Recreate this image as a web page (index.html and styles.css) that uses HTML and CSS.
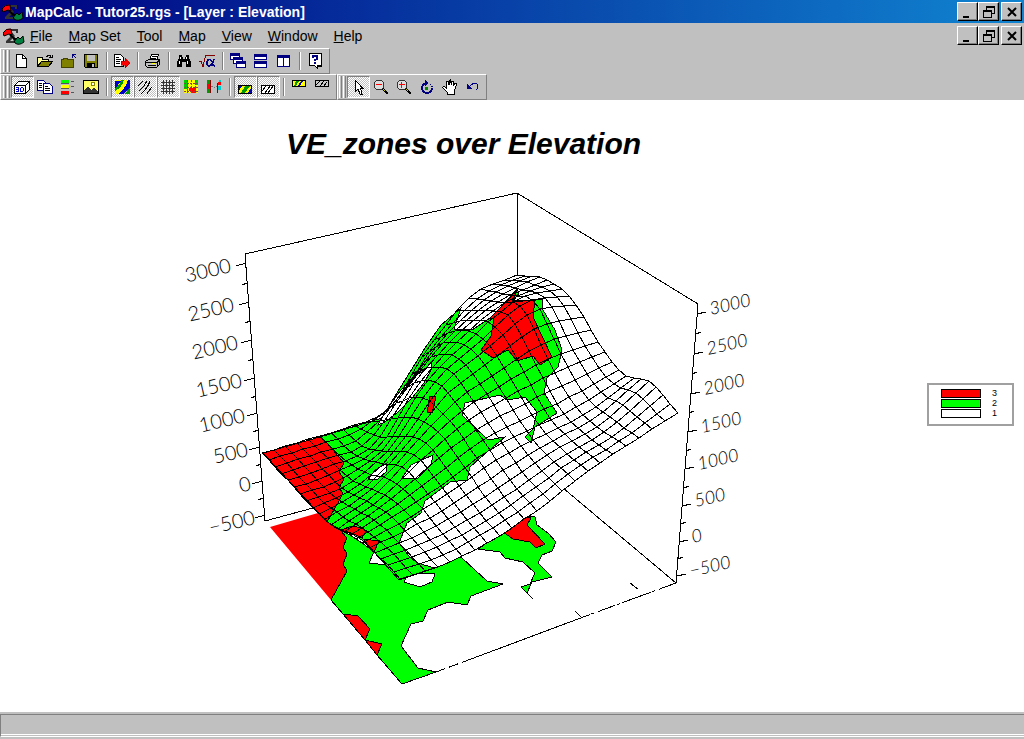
FILE: index.html
```html
<!DOCTYPE html>
<html lang="en">
<head>
<meta charset="utf-8">
<title>MapCalc - Tutor25.rgs - [Layer : Elevation]</title>
<link rel="stylesheet" href="styles.css">
</head>
<body>
<svg class="defs" aria-hidden="true">
    <symbol id="logo" viewBox="0 0 22 18">
        <path d="M3 2H15V6H13V4H8L12 9L7 14H13V12H16V16H3V14L8 9L3 4Z" fill="#333"/>
        <path d="M0 6Q3 1 8 2L9 8L6 7L1 9Z" fill="#f00" stroke="#000"/>
        <path d="M10 10L13 12L15 10L17 12L20 9L21 15Q16 19 12 16Z" fill="#008040" stroke="#000"/>
        <path d="M7 8L13 13" stroke="#000" stroke-width="2"/>
    </symbol>
    <symbol id="win-min" viewBox="0 0 16 14"><path d="M3 11H9V13H3Z"/></symbol>
    <symbol id="win-restore" viewBox="0 0 16 14"><path d="M5 1H14V9H11V8H13V3H6V5H5ZM2 5H11V13H2ZM3 7V12H10V7Z" fill-rule="evenodd"/></symbol>
    <symbol id="win-close" viewBox="0 0 16 14"><path d="M4 3L12 11M12 3L4 11" stroke="#000" stroke-width="2" shape-rendering="auto"/></symbol>
</svg>

<header class="titlebar">
    <svg class="logo"><use href="#logo"/></svg>
    <h2>MapCalc - Tutor25.rgs - [Layer : Elevation]</h2>
    <div class="winbuttons">
        <button aria-label="Minimize"><svg><use href="#win-min"/></svg></button>
        <button aria-label="Restore"><svg><use href="#win-restore"/></svg></button>
        <button class="close" aria-label="Close"><svg><use href="#win-close"/></svg></button>
    </div>
</header>

<nav class="menubar">
    <svg class="logo"><use href="#logo"/></svg>
    <button><u>F</u>ile</button>
    <button><u>M</u>ap Set</button>
    <button><u>T</u>ool</button>
    <button><u>M</u>ap</button>
    <button><u>V</u>iew</button>
    <button><u>W</u>indow</button>
    <button><u>H</u>elp</button>
    <div class="winbuttons">
        <button aria-label="Minimize layer"><svg><use href="#win-min"/></svg></button>
        <button aria-label="Restore layer"><svg><use href="#win-restore"/></svg></button>
        <button class="close" aria-label="Close layer"><svg><use href="#win-close"/></svg></button>
    </div>
</nav>

<div class="toolrow">
    <div class="toolbar">
        <i class="grip"></i>
        <button aria-label="New"><svg viewBox="0 0 16 16"><path d="M2.500 1.500H8.500L12.500 5.500V14.500H2.500Z" fill="#fff" stroke="#000"/><path d="M8.500 1.500V5.500H12.500" fill="none" stroke="#000"/></svg></button>
        <button aria-label="Open"><svg viewBox="0 0 16 16"><path d="M.5 13.500V4.500H5.500V6.500H11.500V8.500" fill="#ff9" stroke="#000"/><path d="M.5 13.500L4.500 8.500H15.500L11.500 13.500Z" fill="#808000" stroke="#000"/><path d="M9 3.500H10V2.500H13V3.500H14M15 2V5M12 4.500H15" fill="none" stroke="#000"/></svg></button>
        <button aria-label="Close file"><svg viewBox="0 0 16 16"><path d="M1.500 14.500V6.500H3.500V5.500H7.500V6.500H13.500V14.500Z" fill="#808000" stroke="#440"/><path d="M12.500 1.500V5M12 1.500H16M13 2L16 5" stroke="#000080" fill="none"/></svg></button>
        <button aria-label="Save"><svg viewBox="0 0 16 16"><path d="M1.500 1.500H14.500V14.500H2.500L1.500 13.500Z" fill="#808000" stroke="#000"/><path d="M4 2H12V8H4Z" fill="#c0c0c0"/><path d="M4 10H12V14H4Z"/><path d="M9 11H11V14H9Z" fill="#c0c0c0"/></svg></button>
        <i class="sep"></i>
        <button aria-label="Export"><svg viewBox="0 0 16 16"><path d="M.5 1.500H6.500L9.500 4.500V13.500H.5Z" fill="#fff" stroke="#000"/><path d="M2 4.500H5M2 6.500H7M2 8.500H6M2 10.500H6" stroke="#000"/><path d="M7 8H11V4.500L16 10L11 15V12H7Z" fill="#f00" stroke="#800" stroke-width=".5"/></svg></button>
        <i class="sep"></i>
        <button aria-label="Print"><svg viewBox="0 0 16 16"><path d="M4.500 7.500L6.500 1.500H13.500L11.500 7.500Z" fill="#fff" stroke="#000"/><path d="M7 3.500H12M6 5.500H11" stroke="#000"/><path d="M.5 8.500L3.500 6.500H14.500V11.500L11.500 14.500H2.500L.5 12.500Z" fill="#c0c0c0" stroke="#000"/><path d="M1 9.500H12L14 7.500M3 12.500H11M12 10V14" stroke="#000" fill="none"/><path d="M7 10.500H10" stroke="#ff0"/></svg></button>
        <i class="sep"></i>
        <button aria-label="Find"><svg viewBox="0 0 16 16"><path d="M3 2H6V4H7V6H9V4H10V2H13V5L15 9V14H10V9H6V14H1V9L3 5Z"/><path d="M4.500 4V6M3.500 8V11M10.500 4V6M11.500 8V11" stroke="#fff"/></svg></button>
        <button aria-label="Formula"><svg viewBox="0 0 16 16"><path d="M0 8.500H2L4 14L6.500 2.500H16" fill="none" stroke="#800000"/><path d="M15 6C13 14 8 15 8 10C8 5 13 5 14 12L16 13" fill="none" stroke="#000080" stroke-width="1.500"/></svg></button>
        <i class="sep"></i>
        <button aria-label="Cascade"><svg viewBox="0 0 16 16"><g fill="#fff" stroke="#000080"><path d="M.5 .5H9.500V6.500H.5ZM3.500 4.500H12.500V10.500H3.500ZM6.500 8.500H15.500V14.500H6.500Z"/><path d="M1 1.500H9M4 5.500H12M7 9.500H15" stroke-width="2"/></g></svg></button>
        <button aria-label="Tile horizontally"><svg viewBox="0 0 16 16"><g fill="#fff" stroke="#000080"><path d="M1.500 1.500H13.500V6.500H1.500ZM1.500 8.500H13.500V14.500H1.500Z"/><path d="M1 2.500H14M1 9.500H14" stroke-width="2"/></g></svg></button>
        <button aria-label="Tile vertically"><svg viewBox="0 0 16 16"><g fill="#fff" stroke="#000080"><path d="M1.500 2.500H7.500V13.500H1.500ZM7.500 2.500H13.500V13.500H7.500Z"/><path d="M1 3.500H14" stroke-width="2"/></g></svg></button>
        <i class="sep"></i>
        <button aria-label="Help"><svg viewBox="0 0 16 16"><path d="M2.500 .5H14.500V12.500H10.500V15.500L7.500 12.500H2.500Z" fill="#fff" stroke="#000"/><path d="M14 2V13H11" fill="none" stroke="#000"/><path d="M6 5V3H10V6L8 7V8M8 9V11" fill="none" stroke="#000080" stroke-width="2"/></svg></button>
    </div>
</div>

<div class="toolrow">
    <div class="toolbar">
        <i class="grip"></i>
        <button class="on" aria-label="3D view"><svg viewBox="0 0 16 16"><path d="M.5 6.500L4.500 2.500H15.500V10.500L11.500 14.500H.5ZM.5 6.500H11.500V14.500M11.500 6.500L15.500 2.500" fill="#fff" stroke="#000"/><path d="M2 8.500H4.500V12.500H2M2 10.500H4M7 8.500H8.500L9.500 9.500V11.500L8.500 12.500H6.500V8.500" fill="none" stroke="#00c"/></svg></button>
        <button aria-label="Copy"><svg viewBox="0 0 16 16"><g fill="#fff" stroke="#000080"><path d="M.5 1.500H6.500L8.500 3.500V11.500H.5Z"/><path d="M6.500 4.500H12.500L15.500 7.500V14.500H6.500Z"/></g><path d="M2 4.500H5M2 6.500H5M2 8.500H5M8 7.500H11M8 9.500H13M8 11.500H13" stroke="#000"/></svg></button>
        <button aria-label="Legend"><svg viewBox="0 0 16 16"><path d="M1 1H9V4H1Z" fill="#0f0"/><path d="M1 6H9V9H1Z" fill="#ff0"/><path d="M1 12H9V15H1Z" fill="#f00"/><path d="M1 4.500H9M1 9.500H9M1 15.500H9M11 2.500H14M11 7.500H14M11 13.500H14" stroke="#555"/></svg></button>
        <button aria-label="Picture"><svg viewBox="0 0 16 16"><path d="M.5 1.500H15.500V14.500H.5Z" fill="#ff6" stroke="#000"/><circle cx="10" cy="5" r="2" fill="#fff" stroke="#880"/><path d="M1 14V12L5 7L8 11L11 9L15 13V14Z" fill="#333"/></svg></button>
        <i class="sep"></i>
        <button class="on" aria-label="Filled zones"><svg viewBox="0 0 16 16"><path d="M1 1H16L9 15H1Z" fill="#ff0"/><path d="M1 2H7L1 10Z" fill="#00c"/><path d="M14 1H16V8L9 15H4Q12 9 14 1Z" fill="#00c"/><path d="M10 1Q8 8 1 12V9Q6 6 7 1Z" fill="#090"/><path d="M16 8V15H11Z" fill="#090"/></svg></button>
        <button class="on" aria-label="Contour lines"><svg viewBox="0 0 16 16"><path d="M6 2L1 7M10 2Q7 8 2 12M13 2Q11 9 4 15M15 8Q12 11 10 15" fill="none" stroke="#000"/></svg></button>
        <button class="on" aria-label="Grid"><svg viewBox="0 0 16 16"><path d="M1 3.500H15M1 6.500H15M1 9.500H15M1 12.500H15M3.500 1V15M6.500 1V15M9.500 1V15M12.500 1V15" stroke="#333"/></svg></button>
        <button aria-label="Cell values"><svg viewBox="0 0 16 16"><path d="M1 1H15V14H1Z" fill="#ff0"/><path d="M1 1H5V10H1ZM12 1H15V6H12Z" fill="#0c0"/><path d="M6 9H13V14H8V12H6Z" fill="#f00"/><path d="M1 4.500H15M1 8.500H15M1 12.500H15M4.500 1V14M8.500 1V14M12.500 1V14" stroke="#844" stroke-dasharray="2 1"/></svg></button>
        <button aria-label="Profile"><svg viewBox="0 0 16 16"><path d="M1 1H4V5H1ZM1 10H4V14H1Z" fill="#090"/><path d="M1 5H4V10H1ZM12 3H15V6H12Z" fill="#f00"/><path d="M12 7H15V11H12ZM13 1H15V3H13Z" fill="#0cc"/><path d="M4.500 1V14M11.500 4V14" stroke="#800"/><path d="M5 7L8 9L11 7" stroke="#777" stroke-dasharray="2 1" fill="none"/></svg></button>
        <i class="sep"></i>
        <button class="on" aria-label="Filled floor"><svg viewBox="0 0 16 16"><path d="M1.500 6.500H14.500V14.500H1.500Z" fill="#ff0" stroke="#000"/><path d="M2 7H5L2 12ZM11 14L14 9V14Z" fill="#00c"/><path d="M8 7H13L8 14H4Z" fill="#090"/></svg></button>
        <button class="on" aria-label="Contoured floor"><svg viewBox="0 0 16 16"><path d="M1.500 6.500H14.500V14.500H1.500Z" fill="#fff" stroke="#000"/><path d="M6 7L2 12M10 7L5 14M13 7L8 14" stroke="#000"/></svg></button>
        <i class="sep"></i>
        <button aria-label="Filled ceiling"><svg viewBox="0 0 16 16"><path d="M1.500 1.500H14.500V7.500H1.500Z" fill="#ff0" stroke="#000"/><path d="M10 2H12L9 7H7Z" fill="#00c"/><path d="M5 2H8L5 7H3Z" fill="#090"/></svg></button>
        <button aria-label="Contoured ceiling"><svg viewBox="0 0 16 16"><path d="M1.500 1.500H14.500V7.500H1.500Z" fill="#ccc" stroke="#000"/><path d="M6 2L2 6M10 2L6 7M13 3L10 7" stroke="#000"/></svg></button>
    </div>
    <div class="toolbar">
        <i class="grip"></i>
        <button class="on" aria-label="Select"><svg viewBox="0 0 16 16"><path d="M5.500 1.500V12.500L8 10L10 15H12L10.500 9.500H13Z" fill="#fff" stroke="#000"/></svg></button>
        <button aria-label="Zoom out"><svg viewBox="0 0 16 16"><path d="M9 9L15 15" stroke="#000" stroke-width="2"/><path d="M9 9L12 12" stroke="#cc0"/><circle cx="6" cy="6" r="5" fill="#ddd" stroke="#333"/><path d="M3 5.500H9" stroke="#f00"/></svg></button>
        <button aria-label="Zoom in"><svg viewBox="0 0 16 16"><path d="M9 9L15 15" stroke="#000" stroke-width="2"/><path d="M9 9L12 12" stroke="#cc0"/><circle cx="6" cy="6" r="5" fill="#ddd" stroke="#333"/><path d="M3 5.500H9M5.500 3V9" stroke="#f00"/></svg></button>
        <button aria-label="Rotate"><svg viewBox="0 0 16 16"><path d="M7 4A5 5 0 1 0 13 9" fill="none" stroke="#000080" stroke-width="2"/><path d="M6 1L10 4L6 7Z" fill="#000080"/><path d="M11 5.500H12M12 7.500H14" stroke="#000080"/><path d="M6 8H9V11H6Z" fill="#080"/></svg></button>
        <button aria-label="Pan"><svg viewBox="0 0 16 16"><path d="M5 15V13L.5 8.500L2 7.500L4.500 9V3L6 2.500L7 6V1.500L8.500 1L9.500 6V2H11V7L13 4L14.500 5L12.500 12V15Z" fill="#fff" stroke="#000"/></svg></button>
        <button aria-label="Undo"><svg viewBox="0 0 16 16"><path d="M4 8Q8 3 12 5Q14 8 11 11" fill="none" stroke="#000080"/><path d="M2 5V10H7Z" fill="#000080"/></svg></button>
    </div>
</div>

<main>
    <section class="chart">
        <h1>VE_zones over Elevation</h1>
        <svg id="surface" viewBox="0 166 927 538" role="img" aria-label="VE zones draped over the elevation surface">
            <g class="line">
                <path d="M517 280V193L698 304L676 583L563 488"/>
                <path d="M517 193L245 254L265 521L313 508"/>
                <path d="M676 583L586 616"  stroke-dasharray="18 4 3 2 30 3 3 2"/>
                <path d="M586 616L463 662"/>
                <path d="M436 672L463 662" stroke-dasharray="10 4"/>
                <path d="M630 583L638 589M575 611L582 618M527 593L533 599"/>
            </g>
            <!-- zones on the floor -->
            <path class="zone3" d="M270 527L318 513L330 522L340 530L347 538L343 547L347 554L343 564L347 571L331 600Z"/>
            <path class="zone2 line" d="M340 530L347 538L343 547L347 554L343 564L347 571L331 600L343 614L358 616L370 629L365 640L382 644L377 655L402 684L436 672L418 668L401 646L411 624L423 621L428 610L448 602L467 605L471 596L503 584L487 581L462 558L430 540Z"/>
            <path class="zone3 line" d="M343 614L358 616L370 629L365 640ZM365 640L382 644L377 655Z"/>
            <path class="zone2 line" d="M478 549L500 552L505 558L523 562L535 573L530 584L521 587L527 593L532 582L552 577L538 563L542 555L552 551L556 542L548 533L537 525L535 517L523 516L503 532Z"/>
            <path class="zone3 line" d="M503 532L520 517L531 518L527 525L545 544L536 548L530 542L513 539Z"/>
            <path class="zone1 line" d="M374 552L369 563L386 565ZM404 582L407 575L423 573L435 574L432 582L420 587Z"/>
            <g id="skin"></g>
            <!-- zones on the surface -->
            <path class="zone2 line" d="M320 437L372 421L382 418L400 388L425 348L441 325L461 308L454 329L472 330L490 318L503 305L517 289L519 293L514 300L536 300L542 299L543 310L555 330L562 350L558 367L547 378L544 393L557 413L535 427L531 443L525 437L533 429L537 412L525 397L507 400L500 395L465 403L462 415L488 440L505 437L480 458L470 467L467 480L450 482L425 501L421 513L407 523L399 543L408 555L417 563L435 568L423 572L399 580L374 552L362 540L352 534L341 530L327 522L339 501L343 493L339 488L344 479L339 472L344 463L327 443Z"/>
            <path class="zone1 line" d="M378 425L385 412L400 391L415 375L424 371L431 362L431 370L424 383L412 398L398 412L385 422ZM368 480L375 470L387 463L386 472L378 479ZM402 478L411 465L433 455L431 465L418 478Z"/>
            <path class="zone3 line" d="M263 453L320 437L327 443L344 463L339 472L344 479L339 488L343 493L339 501L327 522ZM341 530L352 526L362 528L366 531L362 538L354 534ZM363 539L379 541L374 552Z"/>
            <path class="zone3 line" d="M430 396L436 397L432 413L427 412ZM517 290L512 302L535 300L533 317L552 357L540 365L533 356L517 361L508 350L493 358L481 350L491 336L494 318L490 318L503 305Z"/>
            <path id="mesh" class="line"/>
            <path id="ticks" class="line"/>
            <g id="labels"></g>
        </svg>
    </section>
    <dl class="legend">
        <dt class="red"></dt><dd>3</dd>
        <dt class="green"></dt><dd>2</dd>
        <dt></dt><dd>1</dd>
    </dl>
</main>

<footer class="statusbar"><div></div></footer>
<script src="chart.js"></script>
</body>
</html>
```
FILE: styles.css
```css
* { box-sizing: border-box; }
body { margin: 0; min-height: 100vh; display: flex; flex-direction: column; background: #c0c0c0; color: #000; font: 14px/16px "Liberation Sans", Arial, sans-serif; }
button { font: inherit; color: inherit; background: none; border: 0; padding: 0; margin: 0; }
.defs { display: none; }
svg { display: block; }

.titlebar { display: flex; align-items: center; height: 23px; padding: 0 2px; color: #fff; background: linear-gradient(to right, #000080, #1084d0); }
.titlebar h2 { margin: 0; font-size: 14px; font-weight: bold; }
.logo { width: 22px; height: 18px; margin-right: 1px; flex: none; }

.menubar { display: flex; align-items: center; height: 25px; padding: 0 2px 0 3px; }
.menubar .logo { margin-right: 5px; }
.menubar > button { margin-right: 16px; }

.winbuttons { display: flex; margin-left: auto; }
.winbuttons button { width: 21px; height: 19px; padding: 1px 2px; background: #c0c0c0; border: 1px solid; border-color: #fff #000 #000 #fff; box-shadow: inset -1px -1px #808080; }
.winbuttons svg { width: 16px; height: 14px; }
.winbuttons .close { margin-left: 2px; }

.toolrow { display: flex; height: 26px; }
.toolbar { display: flex; align-items: center; padding: 0 2px; border: 1px solid; border-color: #fff #808080 #808080 #fff; }
.toolrow .toolbar + .toolbar { padding: 0 1px; }
.toolbar button { width: 23px; height: 22px; padding: 3px; }
.toolbar svg { width: 16px; height: 16px; shape-rendering: crispEdges; }
.toolbar .on { border: 1px solid; border-color: #808080 #fff #fff #808080; padding: 2px; background: repeating-conic-gradient(#fff 0 25%, #c0c0c0 0 50%) 0 0 / 2px 2px; }
.grip { width: 7px; height: 22px; margin-right: 1px; background: linear-gradient(to right, #fff 1px, #c0c0c0 1px 2px, #808080 2px 3px, #c0c0c0 3px 4px, #fff 4px 5px, #c0c0c0 5px 6px, #808080 6px); }
.sep { width: 2px; height: 18px; margin: 0 3px; border-left: 1px solid #808080; border-right: 1px solid #fff; }

main { flex: 1; display: flex; align-items: center; padding-right: 10px; background: #fff; }
.chart { flex: 1; align-self: flex-start; }
h1 { margin: 26px 0 4px; font-size: 30px; line-height: 36px; font-weight: bold; font-style: italic; text-align: center; }
#surface { width: 100%; }
.line, #skin { stroke: #000; stroke-width: 1px; shape-rendering: crispEdges; }
.line { fill: none; }
.zone1, #skin { fill: #fff; }
.zone2 { fill: #0f0; }
.zone3 { fill: #f00; }
#labels text { font-family: Lato, sans-serif; font-weight: 300; font-size: 20px; }
#labels .right { font-size: 18px; font-style: italic; }
#labels .left { text-anchor: end; }

.legend { display: grid; grid-template-columns: 40px 8px; column-gap: 11px; row-gap: 1px; width: 87px; margin: 0 0 4px; padding: 4px 12px 6px; border: 2px solid #a0a0a0; font-size: 9px; line-height: 9px; }
.legend dt { height: 9px; border: 1px solid #000; background: #fff; }
.legend dd { margin: 0; }
.legend .red { background: #f00; }
.legend .green { background: #0f0; }

.statusbar { height: 27px; padding-top: 2px; border-bottom: 2px solid #c0c0c0; }
.statusbar div { height: 23px; border-top: 1px solid #808080; border-left: 1px solid #808080; border-bottom: 1px solid #fff; box-shadow: inset 0 -1px #c0c0c0, inset 0 -2px #fff; }
```
FILE: chart.js
```js
var APP = APP || {};

APP.CELLS = 22;

// floor corners of the grid: left, front, back, right
APP.floor = [[268, 526], [403, 683], [514, 456], [665, 580]];

// surface heights, one row per step from the left edge to the front edge
APP.heights = [
    [73, 74, 75, 82, 134, 173, 181],
    [74, 76, 82, 130, 168, 190, 198],
    [75, 80, 105, 155, 180, 205, 199],
    [80, 95, 125, 150, 165, 175, 176],
    [93, 105, 120, 138, 145, 152, 164],
    [102, 104, 112, 125, 140, 150, 177],
    [104, 102, 108, 121, 140, 154, 167]
];

APP.cubic = function (a, t) {
    "use strict";
    var n = a.length - 1;
    var i = Math.min(Math.floor(t), n - 1);
    var f = t - i;
    var p1 = a[i];
    var p2 = a[i + 1];
    var p0 = i > 0 ? a[i - 1] : 2 * p1 - p2;
    var p3 = i < n - 1 ? a[i + 2] : 2 * p2 - p1;

    return p1 + 0.5 * f * (p2 - p0 + f * (2 * p0 - 5 * p1 + 4 * p2 - p3 + f * (3 * (p1 - p2) + p3 - p0)));
};

APP.point = function (r, c) {
    "use strict";
    var u = r / APP.CELLS;
    var v = c / APP.CELLS;
    var q = APP.floor;
    var h = APP.cubic(APP.heights.map(function (row) {
        return APP.cubic(row, v * 6);
    }), u * 6);
    var pos = [0, 1].map(function (k) {
        return (1 - v) * ((1 - u) * q[0][k] + u * q[1][k]) + v * ((1 - u) * q[2][k] + u * q[3][k]);
    });

    // verticals lean away from the middle of the box
    return Math.round(pos[0] + (pos[0] - 468) * 0.00038 * h) + " " + Math.round(pos[1] - h);
};

APP.drawMesh = function () {
    "use strict";
    var skin = "";
    var mesh = "";
    var r = 0;
    var c = 0;

    for (r = 0; r <= APP.CELLS; r += 1) {
        for (c = 0; c <= APP.CELLS; c += 1) {
            mesh += (c ? "L" : "M") + APP.point(r, c);
        }
        for (c = 0; c <= APP.CELLS; c += 1) {
            mesh += (c ? "L" : "M") + APP.point(c, r);
        }
    }
    for (r = 0; r < APP.CELLS; r += 1) {
        for (c = APP.CELLS - 1; c >= 0; c -= 1) {
            skin += "<path d=\"M" + APP.point(r, c) + "L" + APP.point(r + 1, c) +
                    "L" + APP.point(r + 1, c + 1) + "L" + APP.point(r, c + 1) + "Z\"/>";
        }
    }
    document.getElementById("skin").innerHTML = skin;
    document.getElementById("mesh").setAttribute("d", mesh);
};

APP.drawAxes = function () {
    "use strict";
    var names = ["3000", "2500", "2000", "1500", "1000", "500", "0", "\u2212500"];
    var left = [263, 302, 340, 378, 413, 447, 481, 515];
    var right = [314, 354, 394, 432, 469, 506, 542, 576];
    var ticks = "";
    var labels = "";

    function tick(x, y, dx, dy) {
        ticks += "M" + Math.round(x) + " " + Math.round(y) + "l" + dx + " " + dy;
    }
    function leftX(y) {
        return 245 + (y - 254) * 0.075;
    }
    function rightX(y) {
        return 698 - (y - 304) * 0.079;
    }

    names.forEach(function (name, i) {
        var y = left[i];
        var y2 = right[i];
        var mid;

        tick(leftX(y), y, -10, 3);
        tick(rightX(y2), y2, 9, -2);
        if (i < names.length - 1) {
            mid = (y + left[i + 1]) / 2;
            tick(leftX(mid), mid, -5, 2);
            mid = (y2 + right[i + 1]) / 2;
            tick(rightX(mid), mid, 5, -2);
        }
        labels += "<text class=\"left\" transform=\"translate(" + Math.round(leftX(y) - 14 + (y - 263) * 0.02) + " " + (y + 9) + ") rotate(-13)\">" + name + "<\/text>";
        labels += "<text class=\"right\" transform=\"translate(" + Math.round(rightX(y2) + 14) + " " + (y2 + 1) + ") rotate(-13)\">" + name + "<\/text>";
    });
    document.getElementById("ticks").setAttribute("d", ticks);
    document.getElementById("labels").innerHTML = labels;
};

APP.drawMesh();
APP.drawAxes();
```
